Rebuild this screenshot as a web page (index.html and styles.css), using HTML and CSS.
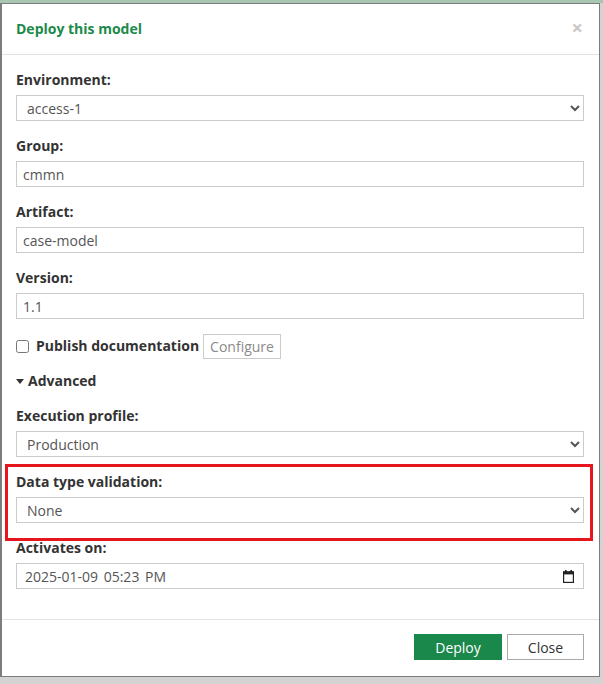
FILE: index.html
```html
<!DOCTYPE html>
<html lang="en">
<head>
<meta charset="utf-8">
<title>Deploy this model</title>
<link rel="stylesheet" href="styles.css">
</head>
<body>
<div class="modal">
  <div class="modal-header">
    <h4 class="modal-title">Deploy this model</h4>
    <span class="close-x">&times;</span>
  </div>
  <div class="modal-body">
    <div class="group">
      <label class="lbl">Environment:</label>
      <select class="ctrl sel"><option>access-1</option></select>
    </div>
    <div class="group">
      <label class="lbl">Group:</label>
      <input class="ctrl inp" type="text" value="cmmn">
    </div>
    <div class="group">
      <label class="lbl">Artifact:</label>
      <input class="ctrl inp" type="text" value="case-model">
    </div>
    <div class="group">
      <label class="lbl">Version:</label>
      <input class="ctrl inp" type="text" value="1.1">
    </div>
    <div class="check-row">
      <input type="checkbox" class="chk">
      <span class="chk-label">Publish documentation</span>
      <button class="btn-config">Configure</button>
    </div>
    <div class="advanced">
      <svg class="caret" width="8" height="5" viewBox="0 0 8 5"><path d="M0 0H8L4 5Z" fill="#333"/></svg>
      <span>Advanced</span>
    </div>
    <div class="group">
      <label class="lbl">Execution profile:</label>
      <select class="ctrl sel"><option>Production</option></select>
    </div>
    <div class="group highlighted">
      <label class="lbl">Data type validation:</label>
      <select class="ctrl sel"><option>None</option></select>
      <div class="red-box"></div>
    </div>
    <div class="group">
      <label class="lbl">Activates on:</label>
      <div class="date-wrap">
        <input class="ctrl inp date-inp" type="text" value="2025-01-09 05:23 PM">
        <svg class="cal" width="11" height="13" viewBox="0 0 11 13">
          <rect x="2" y="0" width="1.6" height="2.5" fill="#222"/>
          <rect x="7.4" y="0" width="1.6" height="2.5" fill="#222"/>
          <rect x="0.6" y="1.8" width="9.8" height="10.6" fill="none" stroke="#222" stroke-width="1.2"/>
          <rect x="0.6" y="1.8" width="9.8" height="2.6" fill="#222"/>
        </svg>
      </div>
    </div>
  </div>
  <div class="modal-footer">
    <button class="btn btn-deploy">Deploy</button>
    <button class="btn btn-close">Close</button>
  </div>
</div>
</body>
</html>
```
FILE: styles.css
```css
html, body {
  margin: 0;
  padding: 0;
}
body {
  width: 603px;
  height: 684px;
  padding-top: 3px;
  box-sizing: border-box;
  background: linear-gradient(#a9c6b3 0, #a9c6b3 3px, #d3d3d3 3px);
  font-family: "Open Sans", "Liberation Sans", sans-serif;
  font-size: 14px;
  color: #333;
  overflow: hidden;
}
.modal {
  width: 600px;
  box-sizing: border-box;
  background: #fff;
  border: 1px solid #7c7c7c;
  border-left: 2px solid #7c7c7c;
}
.modal-header {
  display: flex;
  align-items: center;
  justify-content: space-between;
  padding: 15px 15px 15px 14px;
  border-bottom: 1px solid #e2e2e2;
}
.modal-title {
  margin: 0;
  font-size: 14px;
  line-height: 20px;
  font-weight: 700;
  color: #1b8a4b;
}
.close-x {
  font-size: 20px;
  line-height: 20px;
  font-weight: 700;
  color: #c8c8c8;
  margin-right: 1px;
  margin-top: -2px;
}
.modal-body {
  padding: 15px 15px 15px 14px;
}
.group {
  display: flex;
  flex-direction: column;
  margin-bottom: 15px;
}
.lbl {
  font-weight: 700;
  line-height: 20px;
  margin-bottom: 5px;
  color: #333;
}
.ctrl {
  box-sizing: border-box;
  width: 568px;
  height: 26px;
  border: 1px solid #cccccc;
  border-radius: 0;
  background: #fff;
  font-family: "Open Sans", "Liberation Sans", sans-serif;
  font-size: 14px;
  color: #555;
  margin: 0;
}
.sel {
  padding: 0 6px;
}
.inp {
  padding: 0 6px;
  outline: none;
}
.date-inp {
  padding-left: 8px;
  word-spacing: 2px;
}
.check-row {
  display: flex;
  align-items: center;
  height: 26px;
  margin-top: -14px;
  margin-bottom: 12px;
  padding-top: 13px;
  box-sizing: content-box;
}
.chk {
  width: 13px;
  height: 13px;
  margin: 0 7px 0 0;
}
.chk-label {
  font-weight: 700;
  line-height: 20px;
  margin-right: 4px;
}
.btn-config {
  height: 25px;
  padding: 0 6px;
  border: 1px solid #cccccc;
  background: #fff;
  color: #8a8a8a;
  font-family: "Open Sans", "Liberation Sans", sans-serif;
  font-size: 14px;
  border-radius: 0;
}
.advanced {
  display: flex;
  align-items: center;
  line-height: 20px;
  font-weight: 700;
  margin-bottom: 15px;
}
.caret {
  margin: 0 4px 0 0;
}
.highlighted {
  position: relative;
}
.red-box {
  position: absolute;
  left: -11px;
  top: -8px;
  width: 588px;
  height: 77px;
  box-sizing: border-box;
  border: 3px solid #e5161d;
  pointer-events: none;
}
.date-wrap {
  position: relative;
  width: 568px;
}
.cal {
  position: absolute;
  right: 10px;
  top: 7px;
}
.modal-footer {
  display: flex;
  justify-content: flex-end;
  gap: 5px;
  padding: 14px 15px 16px;
  border-top: 1px solid #e2e2e2;
}
.btn {
  height: 26px;
  font-family: "Open Sans", "Liberation Sans", sans-serif;
  font-size: 14px;
  border-radius: 0;
  padding: 0;
}
.btn-deploy {
  width: 88px;
  background: #1a874b;
  border: 1px solid #1a874b;
  color: #fff;
}
.btn-close {
  width: 77px;
  background: #fff;
  border: 1px solid #aaaaaa;
  color: #333;
}
```
